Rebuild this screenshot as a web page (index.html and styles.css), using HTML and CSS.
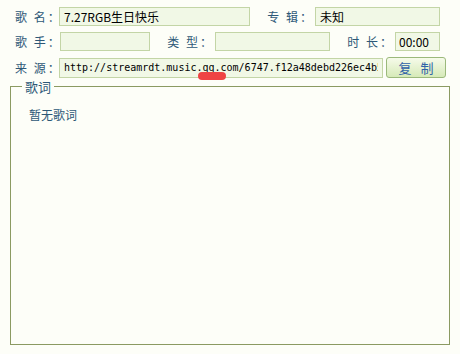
FILE: index.html
```html
<!DOCTYPE html>
<html lang="zh-CN">
<head>
    <meta charset="UTF-8">
    <title>歌曲信息</title>
    <link rel="stylesheet" href="styles.css">
</head>
<body>
    <div class="info">
        <!-- 第一行：歌名 / 专辑 -->
        <div class="row">
            <label class="lbl first">歌 名：</label>
            <input class="field w-name" type="text" value="7.27RGB生日快乐">
            <label class="lbl">专 辑：</label>
            <input class="field w-album" type="text" value="未知">
        </div>

        <!-- 第二行：歌手 / 类型 / 时长 -->
        <div class="row">
            <label class="lbl first">歌 手：</label>
            <input class="field w-singer" type="text" value="">
            <label class="lbl">类 型：</label>
            <input class="field w-type" type="text" value="">
            <label class="lbl">时 长：</label>
            <input class="field w-time" type="text" value="00:00">
        </div>

        <!-- 第三行：来源 -->
        <div class="row">
            <label class="lbl first">来 源：</label>
            <input class="field w-src mono" type="text" value="http://streamrdt.music.qq.com/6747.f12a48debd226ec4b5e1.mp3">
            <button class="copy">复 制</button>
            <span class="mark"></span>
        </div>
    </div>

    <fieldset class="lyrics">
        <legend>歌词</legend>
        <p class="empty">暂无歌词</p>
    </fieldset>
</body>
</html>
```

FILE: styles.css
```css
body {
    margin: 0;
    padding: 7px 0 0 0;
    background: #fdfef8;
    font-family: "Noto Sans CJK SC", "Liberation Sans", sans-serif;
    font-size: 12px;
    color: #000;
}
.info {
    position: relative;
}
.row {
    display: flex;
    align-items: center;
    height: 19px;
    margin-bottom: 6px;
}
.row:last-child {
    height: 21px;
    margin-bottom: 0;
}
.lbl {
    width: 65px;
    box-sizing: border-box;
    padding-right: 1px;
    text-align: right;
    color: #2d5877;
    font-size: 12px;
    letter-spacing: 2px;
    white-space: nowrap;
}
.lbl.first {
    width: 45px;
    margin-left: 15px;
    text-align: left;
    padding-right: 0;
}
.field {
    box-sizing: border-box;
    height: 19px;
    padding: 0 4px;
    border: 1px solid #c3d5a6;
    background: #f1f8e6;
    font-family: "Noto Sans CJK SC", "Liberation Sans", sans-serif;
    font-size: 12px;
    color: #000;
    outline: none;
}
.mono {
    font-family: "DejaVu Sans Mono", "Liberation Mono", monospace;
    font-size: 10px;
    height: 20px;
}
.w-name { width: 191px; margin-left: -1px; }
.w-album { width: 125px; }
.w-singer { width: 90px; }
.w-type { width: 115px; }
.w-time { width: 45px; padding: 0 3px; }
.w-src { width: 324px; margin-left: -1px; }
.copy {
    width: 60px;
    height: 21px;
    margin-left: 3px;
    border: 1px solid #9bb97b;
    border-radius: 3px;
    background: linear-gradient(#f6fbea, #d6eab8);
    color: #2f62a8;
    font-family: "Noto Sans CJK SC", sans-serif;
    font-size: 13px;
    letter-spacing: 3px;
    padding: 0 0 0 3px;
    line-height: 19px;
}
/* red annotation stroke under the url */
.mark {
    position: absolute;
    left: 198px;
    top: 65px;
    width: 28px;
    height: 8px;
    border-radius: 4px;
    background: #ef4444;
}
.lyrics {
    margin: 1px 0 0 10px;
    width: 440px;
    height: 266px;
    box-sizing: border-box;
    padding: 0 11px;
    border: 1px solid #8b9a62;
}
.lyrics legend {
    padding: 0 3px;
    color: #2d5877;
    font-size: 13px;
    line-height: 15px;
}
.empty {
    margin: 12px 0 0 0;
    padding-left: 7px;
    color: #2d5877;
    font-size: 12px;
}
```
